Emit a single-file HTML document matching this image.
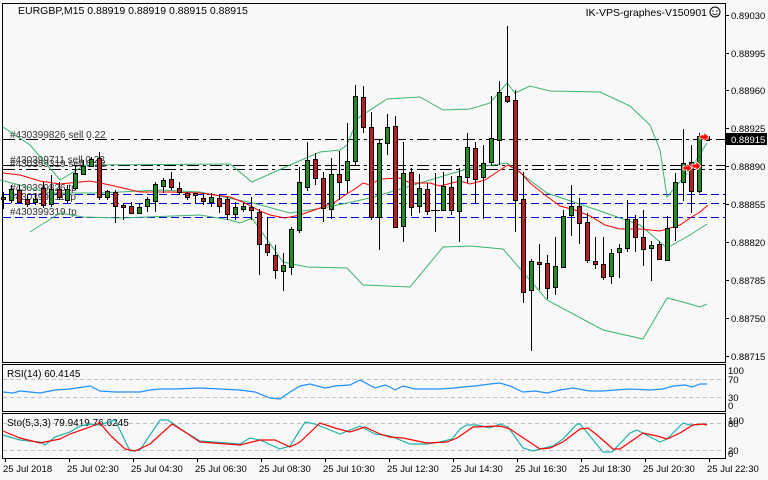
<!DOCTYPE html>
<html><head><meta charset="utf-8"><style>
html,body{margin:0;padding:0;background:#f8f8f8;}
svg{display:block;font-family:"Liberation Sans",sans-serif;}
</style></head><body>
<svg width="768" height="480" viewBox="0 0 768 480" xmlns="http://www.w3.org/2000/svg">
<rect width="768" height="480" fill="#f8f8f8"/>
<g fill="none" stroke="#000" stroke-width="1">
<rect x="2.5" y="3.5" width="723" height="359"/>
<rect x="2.5" y="364.5" width="723" height="47"/>
<rect x="2.5" y="413.5" width="723" height="45"/>
</g>
<g stroke="#000">
<path d="M725 15.5h4M725 53.5h4M725 90.5h4M725 128.5h4M725 166.5h4M725 204.5h4M725 242.5h4M725 280.5h4M725 318.5h4M725 356.5h4"/>
<path d="M5.5 459v3M69.5 459v3M133.5 459v3M197.5 459v3M261.5 459v3M325.5 459v3M389.5 459v3M453.5 459v3M517.5 459v3M581.5 459v3M645.5 459v3M709.5 459v3"/>
</g>
<g font-size="9.5" fill="#000">
<text x="731" y="19">0.89030</text><text x="731" y="57">0.88995</text><text x="731" y="94">0.88960</text><text x="731" y="132">0.88925</text><text x="731" y="170">0.88890</text><text x="731" y="208">0.88855</text><text x="731" y="246">0.88820</text><text x="731" y="284">0.88785</text><text x="731" y="322">0.88750</text><text x="731" y="360">0.88715</text>
</g>
<rect x="726" y="133" width="41" height="12" fill="#000"/>
<text x="731" y="143" font-size="9.5" fill="#fff">0.88915</text>
<g stroke="#000" stroke-dasharray="12,4,3,4" fill="none">
<path d="M3 139.5H725M3 165.5H725M3 169.5H725"/>
</g>
<g stroke="#0000e0" stroke-dasharray="8,4" fill="none">
<path d="M3 194.5H725M3 203.5H725M3 217.5H725"/>
</g>
<g font-size="10" fill="#333">
<text x="10" y="138">#430399826 sell 0.22</text>
<text x="10" y="163">#430399711 sell 0.22</text>
<text x="10" y="167">#430399319 sell 0.22</text>
<text x="10" y="191">#430399826 tp</text>
<text x="10" y="200">#430399711 tp</text>
<text x="10" y="215">#430399319 tp</text>
</g>
<g fill="none" stroke="#3cb371" stroke-width="1">
<polyline points="3,127 30,145 60,180 85,165 230,164 252,182 290,165 320,152 340,150 347,145 358,118 387,99 420,97 443,110 470,109 490,103 507,83 515,93 530,86 550,91 600,92 630,106 650,125 660,150 667,197 690,170 707,143"/>
<polyline points="0,180 50,193 100,193 160,190 200,192 253,203 290,213 323,208 347,203 370,198 387,193 440,177 470,168 507,163 547,193 603,212 640,225 667,248 690,235 707,224"/>
<polyline points="30,232 60,213 83,217 120,218 200,215 230,220 240,223 252,218 283,262 307,267 347,268 363,285 410,287 443,247 470,246 503,249 547,300 603,330 643,339 667,298 683,302 700,307 707,304"/>
</g>
<polyline fill="none" stroke="#f00" points="3,173 20,175 40,181 60,184 90,181 110,185 140,192 170,192 200,193 230,197 245,203 260,211 270,215 285,218 300,215 320,208 335,202 345,195 355,189 363,183 370,185 380,179 400,178 410,183 430,183 440,186 460,181 470,184 485,180 500,170 508,165 520,172 530,183 545,195 560,206 575,210 590,216 605,225 620,229 640,229 660,231 670,228 680,225 690,218 700,212 708,205"/>
<path stroke="#000" fill="none" d="M3.5 192V209M11.5 185V203M19.5 185V203M27.5 195V207M35.5 193V205M43.5 182V208M51.5 175V207M59.5 182V200M67.5 185V203M75.5 165V190M83.5 160V175M91.5 157V167M99.5 152V200M107.5 190V200M115.5 190V223M123.5 203V220M131.5 202V214M139.5 203V214M147.5 197V212M155.5 182V212M163.5 178V193M171.5 172V190M179.5 182V195M187.5 192V200M195.5 193V203M203.5 193V205M211.5 193V207M219.5 195V213M227.5 197V220M235.5 202V220M243.5 203V212M251.5 197V220M259.5 209V275M267.5 217V256M275.5 245V279M283.5 253V291M291.5 227V275M299.5 167V233M307.5 142V191M315.5 153V185M323.5 172V222M331.5 158V219M339.5 151V200M347.5 123V193M355.5 85V165M363.5 86V133M371.5 112V220M379.5 139V250M387.5 114V155M395.5 116V227M403.5 142V242M411.5 168V216M419.5 174V213M427.5 183V215M435.5 173V232M443.5 172V211M451.5 176V215M459.5 168V242M467.5 133V183M475.5 142V203M483.5 145V219M491.5 96V165M499.5 81V165M507.5 26V103M515.5 90V232M523.5 172V303M531.5 259V351M539.5 244V290M547.5 255V299M555.5 237V295M563.5 210V268M571.5 185V236M579.5 198V244M587.5 213V263M595.5 237V269M603.5 237V280M611.5 249V284M619.5 244V278M627.5 200V252M635.5 215V252M643.5 210V266M651.5 241V281M659.5 241V260M667.5 216V261M675.5 173V241M683.5 129V201M691.5 145V213M699.5 133V193M707.5 136V140M431 210.5h9"/>
<g stroke="#000" stroke-width="1">
<g fill="#b22222">
<rect x="1.5" y="197.5" width="4" height="2"/><rect x="17.5" y="190.5" width="4" height="12"/><rect x="25.5" y="199.5" width="4" height="5"/><rect x="41.5" y="188.5" width="4" height="17"/><rect x="57.5" y="189.5" width="4" height="8"/><rect x="97.5" y="158.5" width="4" height="39"/><rect x="113.5" y="192.5" width="4" height="14"/><rect x="121.5" y="205.5" width="4" height="2"/><rect x="129.5" y="206.5" width="4" height="7"/><rect x="169.5" y="179.5" width="4" height="8"/><rect x="177.5" y="188.5" width="4" height="4"/><rect x="185.5" y="193.5" width="4" height="4"/><rect x="193.5" y="193.5" width="4" height="2"/><rect x="201.5" y="198.5" width="4" height="3"/><rect x="217.5" y="198.5" width="4" height="8"/><rect x="225.5" y="199.5" width="4" height="15"/><rect x="249.5" y="207.5" width="4" height="3"/><rect x="257.5" y="212.5" width="4" height="32"/><rect x="265.5" y="244.5" width="4" height="8"/><rect x="273.5" y="255.5" width="4" height="15"/><rect x="313.5" y="159.5" width="4" height="19"/><rect x="321.5" y="178.5" width="4" height="30"/><rect x="337.5" y="174.5" width="4" height="8"/><rect x="361.5" y="97.5" width="4" height="30"/><rect x="369.5" y="127.5" width="4" height="90"/><rect x="393.5" y="126.5" width="4" height="101"/><rect x="409.5" y="172.5" width="4" height="35"/><rect x="425.5" y="189.5" width="4" height="22"/><rect x="449.5" y="187.5" width="4" height="23"/><rect x="473.5" y="148.5" width="4" height="31"/><rect x="505.5" y="96.5" width="4" height="5"/><rect x="513.5" y="100.5" width="4" height="100"/><rect x="521.5" y="199.5" width="4" height="93"/><rect x="537.5" y="262.5" width="4" height="2"/><rect x="545.5" y="263.5" width="4" height="25"/><rect x="577.5" y="206.5" width="4" height="17"/><rect x="585.5" y="222.5" width="4" height="38"/><rect x="593.5" y="261.5" width="4" height="3"/><rect x="601.5" y="264.5" width="4" height="13"/><rect x="633.5" y="219.5" width="4" height="18"/><rect x="641.5" y="237.5" width="4" height="12"/><rect x="657.5" y="244.5" width="4" height="15"/><rect x="689.5" y="162.5" width="4" height="29"/><rect x="705.5" y="136.5" width="4" height="4"/>
</g>
<g fill="#228b22">
<rect x="9.5" y="189.5" width="4" height="11"/><rect x="33.5" y="199.5" width="4" height="3"/><rect x="49.5" y="189.5" width="4" height="15"/><rect x="65.5" y="189.5" width="4" height="11"/><rect x="73.5" y="173.5" width="4" height="15"/><rect x="81.5" y="166.5" width="4" height="8"/><rect x="89.5" y="159.5" width="4" height="7"/><rect x="105.5" y="191.5" width="4" height="6"/><rect x="137.5" y="207.5" width="4" height="6"/><rect x="145.5" y="199.5" width="4" height="7"/><rect x="153.5" y="184.5" width="4" height="17"/><rect x="161.5" y="180.5" width="4" height="6"/><rect x="209.5" y="197.5" width="4" height="5"/><rect x="233.5" y="207.5" width="4" height="7"/><rect x="241.5" y="206.5" width="4" height="3"/><rect x="281.5" y="265.5" width="4" height="6"/><rect x="289.5" y="229.5" width="4" height="38"/><rect x="297.5" y="182.5" width="4" height="48"/><rect x="305.5" y="160.5" width="4" height="27"/><rect x="329.5" y="174.5" width="4" height="35"/><rect x="345.5" y="161.5" width="4" height="19"/><rect x="353.5" y="96.5" width="4" height="65"/><rect x="377.5" y="143.5" width="4" height="74"/><rect x="385.5" y="127.5" width="4" height="16"/><rect x="401.5" y="173.5" width="4" height="53"/><rect x="417.5" y="188.5" width="4" height="18"/><rect x="441.5" y="186.5" width="4" height="24"/><rect x="457.5" y="176.5" width="4" height="35"/><rect x="465.5" y="147.5" width="4" height="30"/><rect x="481.5" y="163.5" width="4" height="14"/><rect x="489.5" y="138.5" width="4" height="24"/><rect x="497.5" y="92.5" width="4" height="48"/><rect x="529.5" y="261.5" width="4" height="29"/><rect x="553.5" y="266.5" width="4" height="21"/><rect x="561.5" y="216.5" width="4" height="51"/><rect x="569.5" y="206.5" width="4" height="9"/><rect x="609.5" y="253.5" width="4" height="23"/><rect x="617.5" y="248.5" width="4" height="4"/><rect x="625.5" y="219.5" width="4" height="29"/><rect x="649.5" y="245.5" width="4" height="3"/><rect x="665.5" y="228.5" width="4" height="32"/><rect x="673.5" y="182.5" width="4" height="45"/><rect x="681.5" y="163.5" width="4" height="19"/><rect x="697.5" y="136.5" width="4" height="55"/>
</g>
</g>
<g fill="#f00" stroke="#fff" stroke-width="0.8">
<polygon points="683,166 687,166 687,163 692,168 687,173 687,170 683,170"/>
<polygon points="692,164 696,164 696,161 701,166 696,171 696,168 692,168"/>
<polygon points="700,135 704,135 704,132 709,137 704,142 704,139 700,139"/>
</g>
<text x="18" y="14" font-size="10.5" fill="#000">EURGBP,M15  0.88919 0.88919 0.88915 0.88915</text>
<text x="707" y="16" font-size="10.5" fill="#000" text-anchor="end">IK-VPS-graphes-V150901</text>
<circle cx="715" cy="12" r="5" fill="none" stroke="#000"/>
<circle cx="713" cy="11" r="0.7" fill="#000"/><circle cx="717" cy="11" r="0.7" fill="#000"/>
<path d="M712.5 13.5q2.5 2.5 5 0" fill="none" stroke="#000" stroke-width="0.8"/>
<g stroke="#c0c0c0" stroke-dasharray="4,3"><path d="M3 379.5H725M3 397.5H725M3 423.5H725M3 450.5H725"/></g>
<text x="7" y="377" font-size="10" fill="#000">RSI(14) 60.4145</text>
<g font-size="9.5" fill="#000"><text x="728" y="374">100</text><text x="728" y="383">70</text><text x="728" y="401">30</text><text x="728" y="409">0</text>
<text x="728" y="424">100</text><text x="728" y="427">80</text><text x="728" y="454">20</text><text x="728" y="457">0</text></g>
<polyline fill="none" stroke="#1e90ff" stroke-width="1.2" points="3,392 13,393 20,391 30,392 40,393 55,390 70,389 90,386 100,391 115,392 140,392 150,390 160,389 175,389 200,388 220,389 240,390 255,392 270,398 280,399 290,392 300,386 310,384 325,388 335,386 350,385 360,380 375,388 385,385 390,387 395,390 403,386 415,389 440,389 455,388 463,387 475,386 490,384 500,383 510,386 523,392 535,391 547,393 560,390 573,388 590,391 603,391 615,390 630,389 650,390 663,389 673,386 685,385 692,387 700,384 707,384"/>
<text x="7" y="426" font-size="10" fill="#000">Sto(5,3,3) 79.9419 76.6245</text>
<polyline fill="none" stroke="#20b2aa" stroke-width="1.2" points="3,435 20,440 40,442 45,445 55,437 70,432 80,426 90,424 100,425 115,420 130,451 140,450 160,420 168,420 185,432 200,441 240,444 250,438 260,440 280,449 290,446 305,422 315,424 330,430 340,434 360,426 375,434 390,436 410,444 427,444 440,442 452,439 460,429 467,425 477,425 490,428 500,424 508,427 523,448 533,451 540,449 553,446 563,439 577,424 580,424 603,452 612,452 630,433 637,430 660,442 667,439 683,423 690,425 707,424"/>
<polyline fill="none" stroke="#f00" stroke-width="1.2" points="3,431 20,438 40,443 60,439 70,434 90,427 100,423 110,435 125,449 135,451 150,444 172,424 185,432 200,442 240,445 260,440 275,440 290,447 300,442 320,423 335,428 350,432 365,427 380,434 390,437 403,438 427,443 447,442 457,438 473,427 500,426 510,429 540,449 550,448 563,442 580,429 588,428 597,435 613,449 620,449 643,433 657,436 667,439 680,433 693,425 703,424 707,425"/>
<g font-size="9.5" fill="#000">
<text x="3" y="472">25 Jul 2018</text><text x="67" y="472">25 Jul 02:30</text><text x="131" y="472">25 Jul 04:30</text><text x="195" y="472">25 Jul 06:30</text><text x="259" y="472">25 Jul 08:30</text><text x="323" y="472">25 Jul 10:30</text><text x="387" y="472">25 Jul 12:30</text><text x="451" y="472">25 Jul 14:30</text><text x="515" y="472">25 Jul 16:30</text><text x="579" y="472">25 Jul 18:30</text><text x="643" y="472">25 Jul 20:30</text><text x="707" y="472">25 Jul 22:30</text>
</g>
</svg>
</body></html>
